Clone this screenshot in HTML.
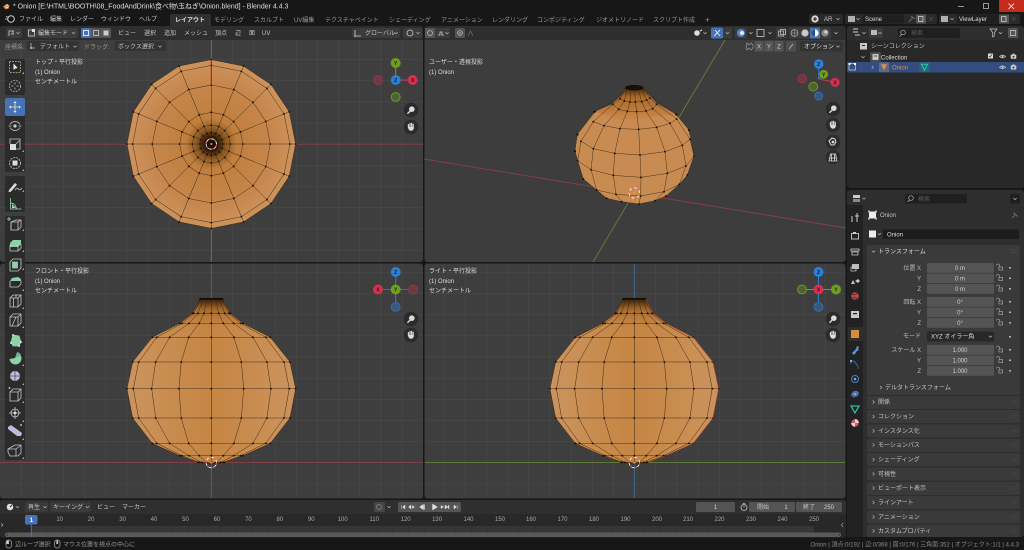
<!DOCTYPE html>
<html><head><meta charset="utf-8"><title>Blender</title>
<style>
html,body{margin:0;padding:0;background:#181818;overflow:hidden}
svg{display:block;font-family:"Liberation Sans","Noto Sans CJK JP",sans-serif}
text{font-size:6px;fill:#b4b4b4;white-space:pre}
.w{fill:#dedede}.d{fill:#969696}.c{text-anchor:middle;fill:#d0d0d0}.r{text-anchor:end;fill:#bdbdbd}.n{font-size:6px;fill:#a8a8a8;text-anchor:middle}
.p{fill:#c4c4c4}
.l{fill:none;stroke:#3a2610;stroke-width:1.35}
.m{marker:url(#dot)}
.v{fill:none;stroke:#3a2610;stroke-width:.48;vector-effect:non-scaling-stroke}
.i{fill:none;stroke:#c8c8c8;stroke-width:.8}
.g{fill:none;stroke:#9fd8b4;stroke-width:.8}
.f{fill:#545454}.pan{fill:#3a3a3a}
.gl{font-size:5px;font-weight:bold;fill:#1c1c1c;text-anchor:middle}
</style></head><body>
<svg width="1024" height="550" viewBox="0 0 1024 550" xmlns="http://www.w3.org/2000/svg">
<defs>
<marker id="dot" viewBox="-4 -4 8 8" markerWidth="8" markerHeight="8" markerUnits="userSpaceOnUse" refX="0" refY="0"><circle r="2.8" fill="#140d06"/></marker>
<pattern id="g1" width="21.17" height="21.17" patternUnits="userSpaceOnUse" patternTransform="translate(211.3 144)"><path d="M0 0H21.17M0 0V21.17" stroke="#4c4c4c" stroke-width="1" fill="none"/></pattern>
<pattern id="g2" width="21.17" height="21.17" patternUnits="userSpaceOnUse" patternTransform="translate(211.3 462.5)"><path d="M0 0H21.17M0 0V21.17" stroke="#4c4c4c" stroke-width="1" fill="none"/></pattern>
<pattern id="g3" width="21.17" height="21.17" patternUnits="userSpaceOnUse" patternTransform="translate(634.3 462.5)"><path d="M0 0H21.17M0 0V21.17" stroke="#4c4c4c" stroke-width="1" fill="none"/></pattern>
<pattern id="tk" width="15.72" height="8" patternUnits="userSpaceOnUse" patternTransform="translate(31 0)"><path d="M0 0V8" stroke="#2a2a2a" stroke-width="1"/></pattern>
<radialGradient id="rt" gradientUnits="userSpaceOnUse" cx="0" cy="0" r="253"><stop offset="0" stop-color="#1c1006"/><stop offset=".08" stop-color="#2a1808"/><stop offset=".17" stop-color="#8a5722"/><stop offset=".3" stop-color="#c07f3e"/><stop offset=".7" stop-color="#c6864c"/><stop offset="1" stop-color="#cd935c"/></radialGradient>
<linearGradient id="fr" gradientUnits="userSpaceOnUse" x1="-253" x2="253" y1="0" y2="0"><stop offset="0" stop-color="#cb945e"/><stop offset=".5" stop-color="#c68543"/><stop offset="1" stop-color="#cb945e"/></linearGradient>
<linearGradient id="nk" gradientUnits="userSpaceOnUse" x1="0" x2="0" y1="55" y2="150"><stop offset="0" stop-color="#2a1606"/><stop offset=".35" stop-color="#9a6226" stop-opacity=".8"/><stop offset="1" stop-color="#c4823f" stop-opacity="0"/></linearGradient>
<linearGradient id="pk" gradientUnits="userSpaceOnUse" x1="0" x2="0" y1="48" y2="140"><stop offset="0" stop-color="#2a1606"/><stop offset=".35" stop-color="#a8692c"/><stop offset="1" stop-color="#c68545"/></linearGradient>
<g id="w"><path class="l m" d="M14 0L34 0 57 0 95 0 177 0 236 0 253 0"/><path class="l" d="M34 0L31.4 13M57 0L52.7 21.8M95 0L87.8 36.4M177 0L163.5 67.7M236 0L218 90.3M253 0L233.7 96.8"/></g>
<path id="mer" class="v" d="M34 57L57 100 95 130 177 172 236 246 253 326 236 414 177 490 95 527 40 547 0 552"/>
<g id="onion">
<path fill="url(#fr)" d="M-34 57L34 57 57 100 95 130 177 172 236 246 253 326 236 414 177 490 95 527 40 547 0 552-40 547-95 527-177 490-236 414-253 326-236 246-177 172-95 130-57 100-34 57Z"/>
<path fill="url(#nk)" d="M-34 57L34 57 57 100 95 130 177 172-177 172-95 130-57 100Z"/>
<use href="#mer"/><use href="#mer" transform="scale(-1 1)"/>
<use href="#mer" transform="scale(.924 1)"/><use href="#mer" transform="scale(-.924 1)"/>
<use href="#mer" transform="scale(.707 1)"/><use href="#mer" transform="scale(-.707 1)"/>
<use href="#mer" transform="scale(.383 1)"/><use href="#mer" transform="scale(-.383 1)"/>
<use href="#mer" transform="scale(.001 1)"/>
<path class="l m" d="M-34 57L-31 57-24 57-13 57 0 57 13 57 24 57 31 57 34 57"/>
<path class="l m" d="M-57 100L-53 100-40 100-22 100 0 100 22 100 40 100 53 100 57 100"/>
<path class="l m" d="M-95 130L-88 130-67 130-36 130 0 130 36 130 67 130 88 130 95 130"/>
<path class="l m" d="M-177 172L-164 172-125 172-68 172 0 172 68 172 125 172 164 172 177 172"/>
<path class="l m" d="M-236 246L-218 246-167 246-90 246 0 246 90 246 167 246 218 246 236 246"/>
<path class="l m" d="M-253 326L-234 326-179 326-97 326 0 326 97 326 179 326 234 326 253 326"/>
<path class="l m" d="M-236 414L-218 414-167 414-90 414 0 414 90 414 167 414 218 414 236 414"/>
<path class="l m" d="M-177 490L-164 490-125 490-68 490 0 490 68 490 125 490 164 490 177 490"/>
<path class="l m" d="M-95 527L-88 527-67 527-36 527 0 527 36 527 67 527 88 527 95 527"/>
<path class="l m" d="M-40 547L-37 547-28 547-15 547 0 547 15 547 28 547 37 547 40 547"/>
<path d="M-34 56H34" stroke="#120a04" stroke-width="4" fill="none"/>
</g>
<g id="cur"><circle r="5.2" fill="none" stroke="#fff" stroke-width=".8"/><circle r="5.2" fill="none" stroke="#d8464a" stroke-width=".8" stroke-dasharray="2.7 2.7"/><circle r="1" fill="#f0a030"/></g>
<g id="lk"><path d="M-3 -3.4a1.6 1.6 0 0 1 3.2 0v1.2" fill="none" stroke="#b0b0b0" stroke-width=".6"/><rect x="-.6" y="-2" width="3.8" height="3" fill="none" stroke="#b0b0b0" stroke-width=".6"/></g>
<g id="eye"><path d="M-3 0Q0-2.8 3 0Q0 2.8-3 0Z" fill="none" stroke="#d0d0d0" stroke-width=".7"/><circle r=".9" fill="#d0d0d0"/></g>
<g id="cam"><rect x="-2.8" y="-1.8" width="5.6" height="4" rx=".5" fill="#d0d0d0"/><rect x="-1.2" y="-2.8" width="2.4" height="1.2" fill="#d0d0d0"/><circle r="1" cy=".2" fill="#3a3a3a"/></g>
<path id="chev" d="M-1.6-.8L0 .8 1.6-.8" fill="none" stroke="#b8b8b8" stroke-width=".7"/>
<path id="chr" d="M-.8-1.6L.8 0-.8 1.6" fill="none" stroke="#b0b0b0" stroke-width=".7"/>
<g id="mag"><circle r="7.3" fill="#2b2b2b"/><circle cx=".8" cy="-.8" r="2.8" fill="#dcdcdc"/><path d="M-1 1.2L-3.6 3.8" stroke="#dcdcdc" stroke-width="1.4"/></g>
<g id="hand"><circle r="7.3" fill="#2b2b2b"/><path d="M-2.6.2L-2.6-2.4M-1-1-1-3.6M.6-1 .6-3.6M2.2-.6 2.2-2.8" stroke="#dcdcdc" stroke-width="1.2" stroke-linecap="round"/><path d="M-2.8-.4H2.9V1.2Q2 3.8 0 3.8Q-2 3.8-2.8 1.2Z" fill="#dcdcdc"/></g>
</defs>

<!-- base -->
<rect width="1024" height="550" fill="#171717"/>
<!-- title bar -->
<path d="M3 6.5L7 3.6 9.5 5.5 8.6 8.6 5.5 9.4Z" fill="#e08a2c"/><circle cx="7" cy="6.6" r="1.3" fill="#fff"/><circle cx="7" cy="6.6" r=".7" fill="#3a70b0"/>
<text x="13" y="8.6" class="w" style="font-size:7px">* Onion [E:\HTML\BOOTH\08_FoodAndDrink\食べ物\玉ねぎ\Onion.blend] - Blender 4.4.3</text>
<path d="M958 6.5h6" stroke="#bbb" stroke-width=".8"/>
<rect x="983.5" y="3.5" width="5" height="5" fill="none" stroke="#bbb" stroke-width=".8"/>
<rect x="999" y="0" width="25" height="12" fill="#c42b1c"/><path d="M1008.5 3.5l5.5 5.5m0-5.5l-5.5 5.5" stroke="#fff" stroke-width=".8"/>

<!-- menu bar -->
<circle cx="11" cy="19" r="3.3" fill="none" stroke="#d0d0d0" stroke-width="1"/><path d="M5 19h3M6 16.5l3 1" stroke="#d0d0d0" stroke-width=".8"/>
<text x="19" y="21" class="p">ファイル</text><text x="50" y="21" class="p">編集</text><text x="70" y="21" class="p">レンダー</text><text x="101" y="21" class="p">ウィンドウ</text><text x="139" y="21" class="p">ヘルプ</text>
<path d="M170 26V16a2 2 0 0 1 2-2h37a2 2 0 0 1 2 2v10Z" fill="#303030"/>
<text x="175" y="22" class="w" style="font-weight:bold">レイアウト</text>
<text x="214" y="22" class="d">モデリング</text><text x="254" y="22" class="d">スカルプト</text><text x="294" y="22" class="d">UV編集</text><text x="325" y="22" class="d">テクスチャペイント</text><text x="389" y="22" class="d">シェーディング</text><text x="441" y="22" class="d">アニメーション</text><text x="492" y="22" class="d">レンダリング</text><text x="537" y="22" class="d">コンポジティング</text><text x="596" y="22" class="d">ジオメトリノード</text><text x="653" y="22" class="d">スクリプト作成</text><text x="705" y="22.5" class="d" style="font-size:8px">+</text>
<!-- top right selectors -->
<rect x="809" y="14" width="34" height="10" rx="2" fill="#2a2a2a"/><circle cx="815" cy="19" r="3.6" fill="#ddd"/><circle cx="815" cy="19" r="1.7" fill="#444"/><text x="824" y="21" class="p">AR</text><use href="#chev" x="838" y="19"/>
<rect x="845" y="14" width="92" height="10" rx="2" fill="#2a2a2a"/><rect x="863" y="14.5" width="41" height="9" fill="#1f1f1f"/><rect x="848" y="16" width="7" height="6" fill="#b0b0b0"/><use href="#chev" x="858" y="19"/><text x="865" y="21" class="w">Scene</text>
<path d="M909 22l4-5m-2-1l4 3" stroke="#777" stroke-width=".8" fill="none"/><rect x="916" y="14.5" width="10" height="9" fill="#555"/><rect x="918.5" y="16.5" width="4.5" height="5" fill="none" stroke="#ddd" stroke-width=".7"/><path d="M929 17l4 4m0-4l-4 4" stroke="#4a4a4a" stroke-width=".8"/>
<rect x="939" y="14" width="81" height="10" rx="2" fill="#2a2a2a"/><rect x="957" y="14.5" width="43" height="9" fill="#1f1f1f"/><rect x="941" y="16" width="7" height="6" fill="#b0b0b0"/><use href="#chev" x="952" y="19"/><text x="959" y="21" class="w">ViewLayer</text>
<rect x="999" y="14.5" width="10" height="9" fill="#555"/><rect x="1001.5" y="16.5" width="4.5" height="5" fill="none" stroke="#ddd" stroke-width=".7"/><path d="M1012 17l4 4m0-4l-4 4" stroke="#4a4a4a" stroke-width=".8"/>

<!-- viewports -->
<rect x="0" y="26" width="423" height="236" rx="3" fill="#3e3e3e"/><rect x="0" y="40" width="423" height="222" fill="url(#g1)"/>
<rect x="424.5" y="26" width="421" height="236" rx="3" fill="#3d3d3d"/>
<rect x="0" y="263.5" width="423" height="235" rx="3" fill="#3e3e3e"/><rect x="0" y="264" width="423" height="234" fill="url(#g2)"/>
<rect x="424.5" y="263.5" width="421" height="235" rx="3" fill="#3e3e3e"/><rect x="425" y="264" width="420" height="234" fill="url(#g3)"/>

<!-- axes -->
<path d="M0 144.2H423" stroke="#8a3f4a" stroke-width=".9"/><path d="M211.3 40V262" stroke="#62803a" stroke-width=".9"/>
<path d="M424 159L846 228" stroke="#8a3f4a" stroke-width=".9"/><path d="M725 40L593 262" stroke="#62803a" stroke-width=".9"/>
<path d="M211.3 264V498" stroke="#3d6a9c" stroke-width=".9"/><path d="M0 462.6H423" stroke="#8a3f4a" stroke-width=".9"/>
<path d="M634.3 264V498" stroke="#3d6a9c" stroke-width=".9"/><path d="M425 462.6H845" stroke="#62803a" stroke-width=".9"/>

<!-- top view onion -->
<g transform="translate(211.3 144) scale(.33333)">
<polygon fill="url(#rt)" points="253,0 233.7,96.8 178.9,178.9 96.8,233.7 0,253 -96.8,233.7 -178.9,178.9 -233.7,96.8 -253,0 -233.7,-96.8 -178.9,-178.9 -96.8,-233.7 0,-253 96.8,-233.7 178.9,-178.9 233.7,-96.8"/>
<use href="#w"/><use href="#w" transform="rotate(22.5)"/><use href="#w" transform="rotate(45)"/><use href="#w" transform="rotate(67.5)"/><use href="#w" transform="rotate(90)"/><use href="#w" transform="rotate(112.5)"/><use href="#w" transform="rotate(135)"/><use href="#w" transform="rotate(157.5)"/><use href="#w" transform="rotate(180)"/><use href="#w" transform="rotate(202.5)"/><use href="#w" transform="rotate(225)"/><use href="#w" transform="rotate(247.5)"/><use href="#w" transform="rotate(270)"/><use href="#w" transform="rotate(292.5)"/><use href="#w" transform="rotate(315)"/><use href="#w" transform="rotate(337.5)"/>
</g>
<path d="M211.3 60V85" stroke="#b01212" stroke-width="1"/>
<use href="#cur" x="211.3" y="144"/>

<!-- front & right onions -->
<g transform="translate(211.3 280) scale(.33333)"><use href="#onion"/></g>
<use href="#cur" x="211.3" y="462.6"/>
<g transform="translate(634.3 280) scale(.33333)"><use href="#onion"/>
<path d="M34 57L57 100 95 130 177 172 236 246 253 326 236 414 177 490 95 527 40 547" fill="none" stroke="#b5462a" stroke-width="1.7"/></g>
<use href="#cur" x="634.3" y="462.6"/>

<!-- perspective onion -->
<g transform="translate(540 70) scale(.33333)">
<path fill="#c88c52" d="M258 50L308 50 325 72 350 100 408 133 447 180 462 258 442 315 418 343 378 378 345 392 297 402 245 395 200 385 170 360 130 327 105 243 112 193 165 125 215 103 240 80Z"/>
<path fill="url(#pk)" d="M258 50L308 50 325 72 350 100 408 133 240 150 165 125 215 103 240 80Z"/>
<g class="l">
<path d="M262 54L253 93 236 118 192 167 160 236 153 299 170 360 200 385"/>
<path d="M272 58L270 96 262 124 240 176 224 250 220 316 228 373 245 395"/>
<path d="M284 59L286 96 290 125 296 178 300 255 303 322 302 378 297 402"/>
<path d="M295 58L305 95 318 123 350 172 375 245 382 310 372 365 345 392"/>
<path d="M303 56L320 90 338 116 390 160 427 226 438 288 418 343 378 378"/>
<path d="M308 52L330 84 350 103 410 147 450 208 462 258 442 315"/>
<path d="M258 52L240 86 218 103 160 155 123 214 113 272 130 327"/>
<path d="M258 50L240 80 165 125 112 193 105 243 113 272M308 50L325 72 408 133 447 180 462 258"/>
</g>
<g class="l m">
<path d="M240 86L253 93 270 96 286 96 305 95 320 90 330 84"/>
<path d="M218 103L236 118 262 124 290 125 318 123 338 116 350 103"/>
<path d="M160 155L192 167 240 176 296 178 350 172 390 160 410 147"/>
<path d="M123 214L160 236 224 250 300 255 375 245 427 226 450 208"/>
<path d="M113 272L153 299 220 316 303 322 382 310 438 288 462 258"/>
<path d="M130 327L170 360 228 373 302 378 372 365 418 343 442 315"/>
<path d="M200 385L245 395 297 402 345 392 378 378"/>
<path d="M165 125L162 126M408 133L409 134M112 193L113 194M447 180L447 181M105 243L105 244"/>
</g>
<ellipse cx="283" cy="53" rx="26" ry="7" fill="#1b1006" stroke="#0c0703" stroke-width="2"/>
</g>
<use href="#cur" x="634.3" y="193"/>

<!-- viewport headers -->
<path d="M0 40V29a3 3 0 0 1 3-3H420a3 3 0 0 1 3 3V40Z" fill="#2e2e2e"/>
<path d="M424.5 40V29a3 3 0 0 1 3-3H842a3 3 0 0 1 3 3V40Z" fill="#2e2e2e"/>
<!-- left header -->
<rect x="6" y="28" width="16" height="10" rx="2" fill="#3c3c3c"/><path d="M9 36v-5h5M11 34h3M13 31v3" stroke="#ccc" stroke-width=".8" fill="none"/><use href="#chev" x="18" y="33"/>
<rect x="27" y="28" width="51" height="10" rx="2" fill="#3c3c3c"/><rect x="28.5" y="30" width="6" height="6" fill="none" stroke="#ccc" stroke-width=".8"/><rect x="32" y="29" width="3" height="3" fill="#ddd"/><text x="38" y="35" class="p">編集モード</text><use href="#chev" x="73.5" y="33"/>
<rect x="81" y="28" width="10" height="10" rx="1.5" fill="#4772b3"/><rect x="83.5" y="30.5" width="5" height="5" fill="none" stroke="#fff" stroke-width=".8"/>
<rect x="91" y="28" width="10" height="10" fill="#555"/><rect x="93.5" y="30.5" width="5" height="5" fill="none" stroke="#ccc" stroke-width=".8"/>
<rect x="101" y="28" width="10" height="10" rx="1.5" fill="#555"/><rect x="103.5" y="30.5" width="5" height="5" fill="#ccc"/>
<text x="118" y="35" class="p">ビュー</text><text x="144" y="35" class="p">選択</text><text x="164" y="35" class="p">追加</text><text x="184" y="35" class="p">メッシュ</text><text x="215" y="35" class="p">頂点</text><text x="235" y="35" class="p">辺</text><text x="249" y="35" class="p">面</text><text x="262" y="35" class="p">UV</text>
<rect x="352" y="28" width="48" height="10" rx="2" fill="#3c3c3c"/><path d="M355 30v6h6" stroke="#ccc" stroke-width=".8" fill="none"/><circle cx="355" cy="36" r="1" fill="#e0a050"/><text x="365" y="35" class="p">グローバル</text><use href="#chev" x="396" y="33"/>
<rect x="403" y="28" width="19" height="10" rx="2" fill="#3c3c3c"/><circle cx="410" cy="33" r="3" fill="none" stroke="#ccc" stroke-width=".8"/><use href="#chev" x="418" y="33"/>
<rect x="425" y="28" width="10" height="10" fill="#555"/><circle cx="430" cy="33" r="2.5" fill="none" stroke="#bbb" stroke-width=".8"/>
<rect x="435" y="28" width="15" height="10" fill="#3c3c3c"/><path d="M438 35h2v-3h2v3h2" stroke="#ccc" stroke-width=".8" fill="none"/><use href="#chev" x="447" y="33"/>
<rect x="455" y="28" width="10" height="10" rx="2" fill="#555"/><circle cx="460" cy="33" r="2.3" fill="none" stroke="#ccc" stroke-width=".7"/><circle cx="460" cy="33" r=".8" fill="#ccc"/>
<path d="M468 36l2.5-5 2.5 5" stroke="#6a6a6a" stroke-width=".8" fill="none"/>
<!-- right header -->
<circle cx="697" cy="33" r="2.8" fill="#ddd"/><path d="M700 31l2-1" stroke="#ddd"/><use href="#chev" x="705" y="33"/>
<rect x="711" y="27.5" width="12" height="11" rx="1.5" fill="#4772b3"/><path d="M714 36l6-6m-5 0l5 6" stroke="#e8e8e8" stroke-width=".9"/><rect x="723" y="27.5" width="9" height="11" fill="#3c3c3c"/><use href="#chev" x="727.5" y="33"/>
<rect x="735" y="27.5" width="12" height="11" rx="1.5" fill="#3c3c3c"/><circle cx="741" cy="33" r="4" fill="#4d87d6"/><circle cx="742" cy="33" r="2" fill="#e8e8e8"/><use href="#chev" x="751" y="33"/>
<rect x="757" y="29.5" width="7" height="7" fill="none" stroke="#ccc" stroke-width=".8"/><use href="#chev" x="770" y="33"/>
<rect x="776" y="27.5" width="11" height="11" rx="1.5" fill="#3c3c3c"/><rect x="778.5" y="31" width="5" height="5" fill="none" stroke="#bbb" stroke-width=".8"/><rect x="780.5" y="29.5" width="5" height="5" fill="none" stroke="#bbb" stroke-width=".8"/>
<rect x="789" y="27.5" width="42" height="11" rx="1.5" fill="#3c3c3c"/><circle cx="794.5" cy="33" r="3.4" fill="none" stroke="#aaa" stroke-width=".8"/><path d="M791 33h7M794.5 29.6v6.8" stroke="#aaa" stroke-width=".5"/><circle cx="805" cy="33" r="3.6" fill="#c8c8c8"/><rect x="810" y="27.5" width="10" height="11" fill="#4772b3"/><circle cx="815" cy="33" r="3.6" fill="#fff"/><path d="M815 29.4a3.6 3.6 0 0 0 0 7.2Z" fill="#2a4f8a"/><circle cx="825" cy="33" r="3.6" fill="#888"/><circle cx="826" cy="32" r="1.8" fill="#ccc"/>
<use href="#chev" x="836" y="33"/>
<!-- tool settings row -->
<text x="5" y="49" class="d">座標系:</text>
<rect x="27" y="41" width="52" height="10" rx="2" fill="#333"/><path d="M31 43v5h4" stroke="#ccc" stroke-width=".7" fill="none"/><circle cx="31" cy="48" r=".9" fill="#ddd"/><text x="40" y="48.5" class="p">デフォルト</text><use href="#chev" x="75" y="46.5"/>
<text x="84" y="49" class="d">ドラッグ:</text>
<rect x="115" y="41" width="51" height="10" rx="2" fill="#333"/><text x="118" y="48.5" class="p">ボックス選択</text><use href="#chev" x="160" y="46.5"/>
<path d="M747 43l2 2 2-2 2 2v3l-2 2-2-2-2 2-1-2Z" fill="none" stroke="#9a9a9a" stroke-width=".7"/>
<rect x="754.5" y="41" width="9" height="10.5" rx="1" fill="#555"/><rect x="764.5" y="41" width="9" height="10.5" rx="1" fill="#555"/><rect x="774.5" y="41" width="9" height="10.5" rx="1" fill="#555"/>
<text x="759" y="48.5" class="c">X</text><text x="769" y="48.5" class="c">Y</text><text x="779" y="48.5" class="c">Z</text>
<rect x="786" y="41" width="10" height="10.5" rx="1" fill="#4e4e4e"/><path d="M789 49l4-5" stroke="#bbb" stroke-width=".8"/>
<rect x="800" y="41" width="43" height="10.5" rx="2" fill="#333"/><text x="804" y="48.5" class="w">オプション</text><use href="#chev" x="838" y="46.5"/>

<!-- viewport labels -->
<text x="35" y="64" class="w">トップ・平行投影</text><text x="35" y="74" class="w">(1) Onion</text><text x="35" y="83.5" class="w">センチメートル</text>
<text x="429" y="64" class="w">ユーザー・透視投影</text><text x="429" y="74" class="w">(1) Onion</text>
<text x="35" y="273" class="w">フロント・平行投影</text><text x="35" y="283" class="w">(1) Onion</text><text x="35" y="292.5" class="w">センチメートル</text>
<text x="429" y="273" class="w">ライト・平行投影</text><text x="429" y="283" class="w">(1) Onion</text><text x="429" y="292.5" class="w">センチメートル</text>

<!-- gizmos -->
<g>
<path d="M395.7 63V80" stroke="#6ea01c" stroke-width="1"/><path d="M395.7 80H412.7" stroke="#d6304f" stroke-width="1"/>
<circle cx="378" cy="80" r="4.4" fill="#6a3b45" stroke="#a03048"/><circle cx="395.7" cy="97" r="4.4" fill="#4f6330" stroke="#6e9a20"/>
<circle cx="395.7" cy="63" r="5" fill="#6ea01c"/><circle cx="412.7" cy="80" r="5" fill="#d6304f"/><circle cx="395.7" cy="80" r="5" fill="#2c7fd6"/>
<text x="395.7" y="65" class="gl">Y</text><text x="412.7" y="82" class="gl">X</text><text x="395.7" y="82" class="gl">Z</text>

<path d="M395.7 272V307" stroke="#2c7fd6" stroke-width="1"/><path d="M378 289.5H413" stroke="#d6304f" stroke-width="1"/>
<circle cx="413" cy="289.5" r="4.4" fill="#6a3b45" stroke="#a03048"/><circle cx="395.7" cy="307" r="4.4" fill="#3a5878" stroke="#2c70b8"/>
<circle cx="395.7" cy="272" r="5" fill="#2c7fd6"/><circle cx="378" cy="289.5" r="5" fill="#d6304f"/><circle cx="395.7" cy="289.5" r="5" fill="#6ea01c"/>
<text x="395.7" y="274" class="gl">Z</text><text x="378" y="291.5" class="gl">X</text><text x="395.7" y="291.5" class="gl">Y</text>

<path d="M818.5 272V307" stroke="#2c7fd6" stroke-width="1"/><path d="M802 289.5H836" stroke="#6ea01c" stroke-width="1"/>
<circle cx="802" cy="289.5" r="4.4" fill="#4f6330" stroke="#6e9a20"/><circle cx="818.5" cy="307" r="4.4" fill="#3a5878" stroke="#2c70b8"/>
<circle cx="818.5" cy="272" r="5" fill="#2c7fd6"/><circle cx="836" cy="289.5" r="5" fill="#6ea01c"/><circle cx="818.5" cy="289.5" r="5" fill="#d6304f"/>
<text x="818.5" y="274" class="gl">Z</text><text x="836" y="291.5" class="gl">Y</text><text x="818.5" y="291.5" class="gl">X</text>

<path d="M818.7 64V79" stroke="#2c7fd6" stroke-width="1"/><path d="M818.7 79L823.7 74.3" stroke="#6ea01c" stroke-width="1"/><path d="M818.7 79L835 82.3" stroke="#d6304f" stroke-width="1"/>
<circle cx="802.3" cy="78.7" r="4.2" fill="#6a3b45" stroke="#a03048"/><circle cx="813.3" cy="86.7" r="4.4" fill="#4f6330" stroke="#6e9a20"/><circle cx="818.7" cy="96" r="4" fill="#3a5878" stroke="#2c70b8"/>
<circle cx="818.7" cy="64" r="4.8" fill="#2c7fd6"/><circle cx="823.7" cy="74.3" r="4.4" fill="#6ea01c"/><circle cx="835" cy="82.3" r="4.6" fill="#d6304f"/>
<text x="818.7" y="66" class="gl">Z</text><text x="823.7" y="76.3" class="gl">Y</text><text x="835" y="84.3" class="gl">X</text>
</g>
<use href="#mag" x="411" y="110"/><use href="#hand" x="411" y="127"/>
<use href="#mag" x="411" y="319"/><use href="#hand" x="411" y="335"/>
<use href="#mag" x="833" y="319"/><use href="#hand" x="833" y="335"/>
<use href="#mag" x="833" y="109"/><use href="#hand" x="833" y="125"/>
<circle cx="833" cy="142" r="7.3" fill="#2b2b2b"/><path d="M829 141l3-3 3 1 1 3-2 3-3 0Z" fill="none" stroke="#ddd" stroke-width="1"/><circle cx="833" cy="142" r="1.4" fill="#ddd"/>
<circle cx="833" cy="157" r="7.3" fill="#2b2b2b"/><path d="M829 161l1.5-7h5l1.5 7ZM831.5 154v7M834.5 154v7M830 158h6" fill="none" stroke="#ddd" stroke-width=".8"/>

<!-- toolbar -->
<rect x="5" y="59" width="20" height="36" rx="2" fill="#2b2b2b"/>
<rect x="5" y="98" width="20" height="74" rx="2" fill="#2b2b2b"/>
<rect x="5" y="176" width="20" height="36" rx="2" fill="#2b2b2b"/>
<rect x="5" y="216" width="20" height="244" rx="2" fill="#2b2b2b"/>
<rect x="5" y="98" width="20" height="18" rx="2" fill="#4772b3"/>
<g class="i">
<rect x="9.5" y="61.5" width="11" height="11" stroke-dasharray="1.6 1.2" stroke="#d8c890"/>
<path d="M13.5 63.5v6.5l1.6-1.4 2.6-.6Z" fill="#eee" stroke="none"/>
<circle cx="15" cy="86" r="5.5" stroke-dasharray="1.8 1.2"/><path d="M15 82.5v2M15 87.5v2M11.5 86h2M16.5 86h2"/>
<path d="M15 102v10M10 107h10" stroke="#e6e6e6"/><path d="M13.4 103l1.6-2 1.6 2ZM13.4 111l1.6 2 1.6-2ZM11 105.4l-2 1.6 2 1.6ZM19 105.4l2 1.6-2 1.6Z" fill="#e6e6e6" stroke="none"/>
<path d="M10 124.5a5.5 5 0 0 1 10 0M10 127.5a5.5 5 0 0 0 10 0"/><circle cx="15" cy="126" r="1.6" fill="#ccc" stroke="none"/><path d="M8.5 126h3M18.5 126h3"/>
<rect x="10" y="144" width="6" height="6" fill="#ddd" stroke="none"/><path d="M10 144v-5h10v10h-4M15.5 144.5l4-4"/>
<circle cx="15" cy="163" r="5.5" stroke-dasharray="2 1"/><rect x="12.5" y="160.5" width="5" height="5" fill="#ddd" stroke="none"/>
<path d="M9 190l6-7 2 1.6-6 7-2.5.5Z" fill="#ddd" stroke="none"/><path d="M15 190q2-3 3.5-1t3.5-1"/>
<path class="g" d="M10.5 198v11h11M10.5 203q5 0 6 6"/><path d="M12 204l4 4h-4Z" fill="#9fd8b4" stroke="none"/>
<g stroke="#c8c8c8"><path d="M11 222l5-2h5v7l-3 3h-7Z"/><path d="M11 222v8M11 222h7v8M18 222l3-2"/></g><path d="M9 217v4M7 219h4" stroke="#9fd8b4"/>
<path d="M10 243l3-3h8v4l-3 3H10Z" fill="#8fd0a8" stroke="none"/><path d="M10 245v6h8v-6M18 251l3-3v-4"/>
<path d="M10 262l3-3h8v9l-3 3h-8Z"/><rect x="12.5" y="262" width="5" height="6" fill="#8fd0a8" stroke="#8fd0a8"/>
<path d="M10 281l2-3 6-1 3 2v2H10Z" fill="#8fd0a8" stroke="none"/><path d="M10 281v6h8l3-3v-3"/>
<path d="M10 298l3-3h8v9l-3 3h-8ZM10 298h8v9M18 298l3-3M13.5 298v9M16 295v3"/>
<path d="M10 317l3-3h8v9l-3 3h-8ZM10 317h8v9M18 317l3-3M12 326l4-9"/>
<path d="M11 342l2-7 6 1 2 6-2 4-6 0Z" fill="#8fd0a8" stroke="#8fd0a8"/><circle cx="13" cy="335" r=".9" fill="#fff" stroke="none"/><circle cx="21" cy="342" r=".9" fill="#fff" stroke="none"/><circle cx="11" cy="343" r=".9" fill="#fff" stroke="none"/><circle cx="19" cy="346" r=".9" fill="#fff" stroke="none"/>
<path d="M15 358l-5.5 1a6 6 0 1 0 10 -5Z" fill="#8fd0a8" stroke="none"/><path d="M15 358l2-6a6 6 0 0 1 4 3Z" fill="#6fb08c" stroke="none"/>
<circle cx="15" cy="376" r="5" fill="#c4b8e0" stroke="none"/><path d="M10 376h10M15 371v10" stroke="#555"/>
<path d="M10 392l3-3h8v9l-3 3h-8ZM10 392h8v9M18 392l3-3"/><circle cx="9.5" cy="388" r=".9" fill="#ddd" stroke="none"/>
<circle cx="15" cy="413" r="4" /><path d="M15 407v12M9 413h12"/><circle cx="15" cy="413" r="1.4" fill="#ddd" stroke="none"/>
<path d="M8 427l3-2 11 8-1 3-4 0-9-7Z" fill="#c4b8e0" stroke="none"/><circle cx="21" cy="425" r=".9" fill="#ddd" stroke="none"/>
<path d="M8 449l7-4h6v8l-3 3H10l-2-4ZM8 449h8l5-4M16 449v7"/>
</g>
<path d="M24 74v-2l-2 2ZM24 152v-2l-2 2ZM24 171v-2l-2 2ZM24 192v-2l-2 2ZM24 231v-2l-2 2ZM24 252v-2l-2 2ZM24 270v-2l-2 2ZM24 291v-2l-2 2ZM24 309v-2l-2 2ZM24 328v-2l-2 2ZM24 366v-2l-2 2ZM24 385v-2l-2 2ZM24 403v-2l-2 2ZM24 422v-2l-2 2ZM24 440v-2l-2 2ZM24 459v-2l-2 2Z" fill="#aaa"/>

<!-- timeline -->
<rect x="0" y="500" width="846" height="37.5" rx="2" fill="#282828"/>
<path d="M0 514V503a3 3 0 0 1 3-3H843a3 3 0 0 1 3 3V514Z" fill="#2f2f2f"/>
<circle cx="10" cy="507" r="3.3" fill="#ddd"/><path d="M10 507l2-2" stroke="#333"/><use href="#chev" x="17.5" y="507"/>
<rect x="25" y="502" width="23" height="10" rx="1.5" fill="#3a3a3a"/><text x="28" y="509" class="p">再生</text><use href="#chev" x="45" y="507"/>
<rect x="50" y="502" width="41" height="10" rx="1.5" fill="#3a3a3a"/><text x="53" y="509" class="p">キーイング</text><use href="#chev" x="87.5" y="507"/>
<text x="97" y="509" class="p">ビュー</text><text x="122" y="509" class="p">マーカー</text>
<rect x="374" y="502" width="11" height="10" rx="1.5" fill="#454545"/><circle cx="379" cy="507" r="2.5" fill="none" stroke="#7a7a7a"/><use href="#chev" x="389" y="507"/>
<rect x="398" y="502" width="63" height="10" rx="1.5" fill="#555"/>
<path d="M401.5 505v4M405 505l-2.5 2 2.5 2ZM411 505l-2.5 2 2.5 2ZM412.5 505.5v3l2 -1.5ZM423 504.5l-3.5 2.5 3.5 2.5ZM423.5 504.5v5h1v-5ZM432.5 504l5 3-5 3ZM441 505.5v3l2.5-1.5ZM445 505v4l2.5-2ZM449 505v4l-1.5-2ZM454 505l2.5 2-2.5 2ZM457.5 505v4" fill="#e0e0e0" stroke="#e0e0e0" stroke-width=".4"/>
<rect x="696" y="502" width="39" height="10" rx="1.5" fill="#545454"/><text x="715.5" y="509" class="c">1</text>
<circle cx="744" cy="507.5" r="3" fill="none" stroke="#ccc" stroke-width=".8"/><path d="M742.8 503.5h2.4M744 507.5v-2" stroke="#ccc" stroke-width=".7"/>
<rect x="749" y="502" width="46" height="10" rx="1.5" fill="#545454"/><text x="757" y="509" class="p">開始</text><text x="786" y="509" class="c">1</text>
<rect x="796" y="502" width="46" height="10" rx="1.5" fill="#545454"/><text x="803" y="509" class="p">終了</text><text x="829" y="509" class="c">250</text>
<!-- ruler -->
<g>
<text x="59.7" y="521" class="n">10</text><text x="91.1" y="521" class="n">20</text><text x="122.6" y="521" class="n">30</text><text x="154" y="521" class="n">40</text><text x="185.5" y="521" class="n">50</text><text x="217" y="521" class="n">60</text><text x="248.4" y="521" class="n">70</text><text x="279.8" y="521" class="n">80</text><text x="311.3" y="521" class="n">90</text><text x="342.7" y="521" class="n">100</text><text x="374.2" y="521" class="n">110</text><text x="405.6" y="521" class="n">120</text><text x="437.1" y="521" class="n">130</text><text x="468.5" y="521" class="n">140</text><text x="500" y="521" class="n">150</text><text x="531" y="521" class="n">160</text><text x="562.5" y="521" class="n">170</text><text x="594" y="521" class="n">180</text><text x="625.5" y="521" class="n">190</text><text x="657" y="521" class="n">200</text><text x="688" y="521" class="n">210</text><text x="719.5" y="521" class="n">220</text><text x="751" y="521" class="n">230</text><text x="782.5" y="521" class="n">240</text><text x="814" y="521" class="n">250</text>
</g>
<rect x="31" y="526" width="783" height="6.5" fill="#363636"/><rect x="31" y="526" width="783" height="6.5" fill="url(#tk)"/>
<rect x="5" y="532.5" width="836" height="4.5" rx="2.2" fill="#5a5a5a"/>
<circle cx="7" cy="534.7" r="1.6" fill="#444" stroke="#777" stroke-width=".5"/><circle cx="839" cy="534.7" r="1.6" fill="#444" stroke="#777" stroke-width=".5"/>
<path d="M31.3 524V537" stroke="#4772b3" stroke-width="1"/>
<rect x="25" y="515" width="12.5" height="9.5" rx="2" fill="#4772b3"/><text x="31.3" y="522" class="c" style="fill:#fff;font-weight:bold">1</text>
<use href="#chr" x="2" y="525"/><path d="M843 523l-1.6 2 1.6 2" stroke="#999" stroke-width=".7" fill="none"/>

<!-- status bar -->
<rect x="6" y="540" width="5.5" height="8" rx="2.5" fill="none" stroke="#aaa" stroke-width=".7"/><rect x="6.5" y="540.5" width="2.4" height="3.5" fill="#ccc"/>
<text x="15" y="546.5" class="d">辺ループ選択</text>
<rect x="54.5" y="540" width="5.5" height="8" rx="2.5" fill="none" stroke="#aaa" stroke-width=".7"/><rect x="56.4" y="540.5" width="1.7" height="3.5" fill="#ccc"/>
<text x="63" y="546.5" class="d">マウス位置を視点の中心に</text>
<text x="1019" y="546.5" style="text-anchor:end;fill:#8a8a8a">Onion | 頂点:0/192 | 辺:0/368 | 面:0/176 | 三角面:352 | オブジェクト:1/1 | 4.4.3</text>

<!-- outliner -->
<rect x="847" y="26" width="177" height="162" rx="3" fill="#282828"/>
<path d="M847 40V29a3 3 0 0 1 3-3H1021a3 3 0 0 1 3 3V40Z" fill="#2e2e2e"/>
<path d="M853 29h5M853 32h5M855 35h5" stroke="#ccc" stroke-width=".9"/><use href="#chev" x="864" y="33"/>
<rect x="869" y="28" width="14" height="10" rx="2" fill="#3c3c3c"/><rect x="871" y="30" width="6" height="5" fill="#bbb"/><use href="#chev" x="880" y="33"/>
<rect x="898" y="28" width="62" height="10" rx="2" fill="#1f1f1f"/><circle cx="903" cy="32.5" r="2.3" fill="none" stroke="#bbb" stroke-width=".7"/><path d="M901.5 34.5l-2 2" stroke="#bbb" stroke-width=".8"/><text x="911" y="35" style="fill:#5c5c5c">検索</text>
<path d="M990 29h7l-2.7 3.5v3.5l-1.6 1v-4.5Z" fill="none" stroke="#c8c8c8" stroke-width=".7"/><use href="#chev" x="1000.5" y="33"/>
<rect x="1008" y="28" width="10" height="10" rx="1.5" fill="#555"/><path d="M1010.5 30.5h5v5h-5Z" fill="none" stroke="#ccc" stroke-width=".7"/>
<rect x="860" y="43" width="7" height="6.5" fill="#c8c8c8"/><rect x="862" y="45" width="3" height="1" fill="#282828"/><text x="871" y="48" class="p">シーンコレクション</text>
<use href="#chev" x="863" y="57"/><rect x="870" y="52" width="11" height="10" rx="1.5" fill="#4a4a4a"/><rect x="872.5" y="54" width="6" height="6" fill="#c8c8c8"/><rect x="874" y="55.5" width="3" height="1" fill="#4a4a4a"/><text x="881" y="59.5" class="w" style="font-weight:normal">Collection</text>
<rect x="988" y="53.5" width="5" height="5" fill="#d8d8d8"/><path d="M989 56l1 1 2-2.5" stroke="#333" stroke-width=".7" fill="none"/><use href="#eye" x="1002.5" y="56.5"/><use href="#cam" x="1013.5" y="56.5"/>
<rect x="847" y="62" width="177" height="10.5" fill="#334d80"/>
<rect x="849" y="63.5" width="6.5" height="6.5" fill="none" stroke="#d8d8d8" stroke-width=".7"/><rect x="848.5" y="63" width="2" height="2" fill="#fff"/><rect x="854" y="63" width="2" height="2" fill="#fff"/>
<path d="M861 63v8" stroke="#4a5f88" stroke-width=".6"/><use href="#chr" x="872.5" y="67.3"/>
<rect x="879" y="62.3" width="10" height="10" rx="1.5" fill="#5a6a8a"/><path d="M881 64.3h6l-3 6Z" fill="#e09050"/>
<text x="892" y="69.5" style="fill:#d8944c">Onion</text>
<rect x="919.5" y="62.3" width="10" height="10" rx="1.5" fill="#28687a"/><path d="M921.5 64.3h6l-3 6Z" fill="none" stroke="#35c6b0" stroke-width="1"/>
<use href="#eye" x="1002.5" y="67.3"/><use href="#cam" x="1013.5" y="67.3"/>

<!-- properties -->
<rect x="847" y="190" width="177" height="347" rx="3" fill="#2e2e2e"/>
<rect x="847" y="205" width="16" height="332" fill="#222"/>
<rect x="853" y="195" width="7" height="3" fill="#ccc"/><rect x="853" y="199" width="7" height="3" fill="#888"/><use href="#chev" x="864" y="198.5"/>
<rect x="905" y="194" width="62" height="9.5" rx="2" fill="#1f1f1f"/><circle cx="911" cy="198" r="2.3" fill="none" stroke="#bbb" stroke-width=".7"/><path d="M909.5 200l-2 2" stroke="#bbb" stroke-width=".8"/><text x="918" y="201" style="fill:#5c5c5c">検索</text>
<rect x="1010" y="194" width="10" height="9.5" rx="2" fill="#1f1f1f"/><use href="#chev" x="1015" y="198.8"/>
<!-- tabs -->
<g>
<path d="M852 216v6M857 213v9M855 216h4" stroke="#ccc" stroke-width="1" fill="none"/>
<rect x="851.5" y="233.5" width="7" height="5.5" fill="none" stroke="#ccc" stroke-width=".9"/><rect x="853" y="232" width="3" height="2" fill="#ccc"/>
<path d="M851 249h8v2h-8ZM852 252h6v3h-6Z" fill="none" stroke="#ccc" stroke-width=".8"/>
<rect x="852" y="264" width="7" height="5" fill="#bbb"/><rect x="851" y="267" width="5" height="4" fill="none" stroke="#ccc" stroke-width=".7"/>
<path d="M851 284l2-4 2 4ZM855 281l3-2 2 2-2 2Z" fill="#c8c8c8"/>
<circle cx="855" cy="296" r="3.8" fill="#b84a4a"/><path d="M852 294q3 1 6-1M853 298q2-1 4 1" stroke="#3a2020" fill="none" stroke-width=".7"/>
<rect x="851" y="311" width="8" height="7" fill="#c8c8c8"/><rect x="853" y="313" width="4" height="1.2" fill="#222"/>
<rect x="848" y="327" width="15" height="14" fill="#2e2e2e"/><rect x="851.5" y="330.5" width="7" height="7" fill="#d88a38" stroke="#e8a050" stroke-width=".8"/>
<path d="M852 353l4-4 1-3 2 1-1 2 1 1-2 1-3 4Z" fill="#5a98e0"/>
<path d="M851 361h3l4 5v3M851 361v3" fill="none" stroke="#3a80d0" stroke-width=".8"/><rect x="850" y="360" width="2" height="2" fill="#8ac"/>
<circle cx="855" cy="379" r="3.5" fill="none" stroke="#4a80d0" stroke-width="1"/><circle cx="855" cy="379" r="1.3" fill="#7aa8e0"/>
<ellipse cx="855" cy="394" rx="4" ry="3" fill="#4a70b0" transform="rotate(-25 855 394)"/><ellipse cx="855" cy="394" rx="1.5" ry="1" fill="#9ab"/>
<path d="M851 406h8l-4 7Z" fill="none" stroke="#25c09a" stroke-width="1.3"/>
<circle cx="855" cy="423" r="3.8" fill="#c85a5a"/><path d="M855 419a3.8 3.8 0 0 1 3.8 4h-3.8Z" fill="#e8d0d0"/><path d="M851.2 423a3.8 3.8 0 0 0 3.8 3.8v-3.8Z" fill="#e8d0d0"/>
</g>
<rect x="869" y="211.5" width="7" height="7" fill="#eee"/><rect x="868" y="210.5" width="2" height="2" fill="#bbb"/><rect x="875" y="210.5" width="2" height="2" fill="#bbb"/><rect x="868" y="217.5" width="2" height="2" fill="#bbb"/><rect x="875" y="217.5" width="2" height="2" fill="#bbb"/>
<text x="880" y="217" class="p">Onion</text>
<path d="M1012 218l3-3m-1.5-2.5l4 4m-3.5-3.500l1.5 2" stroke="#777" stroke-width=".8" fill="none"/>
<rect x="869" y="230.5" width="7" height="7" fill="#eee"/><use href="#chev" x="879.5" y="234"/>
<rect x="883" y="229.5" width="136" height="9.5" rx="1.5" fill="#1c1c1c"/><text x="887" y="236.5" class="w">Onion</text>

<rect x="867" y="245" width="153" height="150" rx="2" class="pan"/>
<use href="#chev" x="873.5" y="251.5"/><text x="878" y="253.5" class="w">トランスフォーム</text>
<text x="921" y="270" class="r">位置 X</text><text x="921" y="280.5" class="r">Y</text><text x="921" y="291" class="r">Z</text>
<text x="921" y="304" class="r">回転 X</text><text x="921" y="314.5" class="r">Y</text><text x="921" y="325" class="r">Z</text>
<text x="921" y="338" class="r">モード</text>
<text x="921" y="352" class="r">スケール X</text><text x="921" y="362.5" class="r">Y</text><text x="921" y="373" class="r">Z</text>
<g class="f">
<rect x="927" y="263" width="67" height="9.8" rx="1"/><rect x="927" y="273.5" width="67" height="9.8" rx="1"/><rect x="927" y="284" width="67" height="9.8" rx="1"/>
<rect x="927" y="297" width="67" height="9.8" rx="1"/><rect x="927" y="307.5" width="67" height="9.8" rx="1"/><rect x="927" y="318" width="67" height="9.8" rx="1"/>
<rect x="927" y="345" width="67" height="9.8" rx="1"/><rect x="927" y="355.5" width="67" height="9.8" rx="1"/><rect x="927" y="366" width="67" height="9.8" rx="1"/>
</g>
<rect x="927" y="331.5" width="67" height="10" rx="1.5" fill="#282828"/>
<text x="960" y="270" class="c">0 m</text><text x="960" y="280.5" class="c">0 m</text><text x="960" y="291" class="c">0 m</text>
<text x="960" y="304" class="c">0°</text><text x="960" y="314.5" class="c">0°</text><text x="960" y="325" class="c">0°</text>
<text x="931" y="338.5" class="w">XYZ オイラー角</text><use href="#chev" x="990.5" y="336.5"/>
<text x="960" y="352" class="c">1.000</text><text x="960" y="362.5" class="c">1.000</text><text x="960" y="373" class="c">1.000</text>
<use href="#lk" x="999.5" y="269"/><use href="#lk" x="999.5" y="279.5"/><use href="#lk" x="999.5" y="290"/>
<use href="#lk" x="999.5" y="303"/><use href="#lk" x="999.5" y="313.5"/><use href="#lk" x="999.5" y="324"/>
<use href="#lk" x="999.5" y="351"/><use href="#lk" x="999.5" y="361.5"/><use href="#lk" x="999.5" y="372"/>
<path d="M1009.3 267h1.500v1.500h-1.500ZM1009.3 277.500h1.500v1.500h-1.500ZM1009.3 288h1.500v1.500h-1.500ZM1009.3 301h1.500v1.500h-1.500ZM1009.3 311.500h1.500v1.500h-1.500ZM1009.3 322h1.500v1.500h-1.500ZM1009.3 336h1.500v1.500h-1.500ZM1009.3 349h1.500v1.500h-1.500ZM1009.3 359.500h1.500v1.500h-1.500ZM1009.3 370h1.500v1.500h-1.500Z" fill="#ddd"/>
<path d="M1011 250h6M1011 252.5h6" stroke="#4e4e4e" stroke-width=".7"/>
<use href="#chr" x="881" y="387.5"/><text x="885" y="389.5" class="p">デルタトランスフォーム</text>
<g class="pan">
<rect x="867" y="396" width="153" height="13" rx="2"/><rect x="867" y="410" width="153" height="13" rx="2"/><rect x="867" y="424.5" width="153" height="13" rx="2"/><rect x="867" y="439" width="153" height="13" rx="2"/><rect x="867" y="453" width="153" height="13" rx="2"/><rect x="867" y="467.5" width="153" height="13" rx="2"/><rect x="867" y="482" width="153" height="13" rx="2"/><rect x="867" y="496" width="153" height="13" rx="2"/><rect x="867" y="510.5" width="153" height="13" rx="2"/><rect x="867" y="525" width="153" height="12" rx="2"/>
</g>
<use href="#chr" x="873.5" y="402"/><use href="#chr" x="873.5" y="416.5"/><use href="#chr" x="873.5" y="431"/><use href="#chr" x="873.5" y="445"/><use href="#chr" x="873.5" y="459.5"/><use href="#chr" x="873.5" y="474"/><use href="#chr" x="873.5" y="488"/><use href="#chr" x="873.5" y="502.5"/><use href="#chr" x="873.5" y="517"/><use href="#chr" x="873.5" y="531"/>
<text x="878" y="404" class="p">関係</text><text x="878" y="418.5" class="p">コレクション</text><text x="878" y="433" class="p">インスタンス化</text><text x="878" y="447" class="p">モーションパス</text><text x="878" y="461.5" class="p">シェーディング</text><text x="878" y="476" class="p">可視性</text><text x="878" y="490" class="p">ビューポート表示</text><text x="878" y="504.5" class="p">ラインアート</text><text x="878" y="519" class="p">アニメーション</text><text x="878" y="533" class="p">カスタムプロパティ</text>
<path d="M1011 401h6M1011 403h6M1011 415.5h6M1011 417.5h6M1011 430h6M1011 432h6M1011 444h6M1011 446h6M1011 458.5h6M1011 460.5h6M1011 473h6M1011 475h6M1011 487h6M1011 489h6M1011 501.5h6M1011 503.5h6M1011 516h6M1011 518h6M1011 530h6M1011 532h6" stroke="#4a4a4a" stroke-width=".6"/>
</svg>
</body></html>
